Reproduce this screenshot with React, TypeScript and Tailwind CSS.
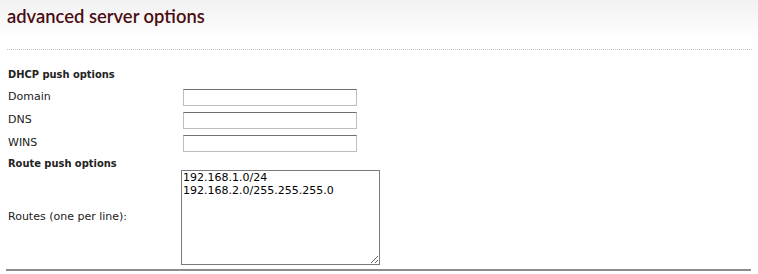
export default function App() {
  const fields = ["Domain", "DNS", "WINS"];
  const boldFont = { fontFamily: '"DejaVu Sans Condensed", "DejaVu Sans", Verdana, sans-serif' };

  return (
    <div className="w-[758px] h-[274px] bg-white overflow-hidden" style={{ fontFamily: '"DejaVu Sans", Verdana, sans-serif' }}>
      {/* header */}
      <div className="h-[40px] bg-gradient-to-b from-[#f1f1f1] to-white pl-[7px] pt-[3px]">
        <h1 className="text-[18.4px] leading-[26px] font-semibold text-[#4b0d12]" style={{ fontFamily: 'Lato, "Open Sans", sans-serif' }}>
          advanced server options
        </h1>
      </div>
      <div className="mx-[7px] mt-[9px] w-[745px] border-t border-dotted border-[#c4c4c4]" />

      <div className="pl-[8px] pt-[14px] text-[11px] text-[#222]">
        <div className="font-bold h-[22px] leading-[22px]" style={boldFont}>DHCP push options</div>
        {fields.map((f) => (
          <div key={f} className="flex items-center h-[23px]">
            <span className="w-[175px]">{f}</span>
            <input
              type="text"
              className="w-[174px] h-[17px] bg-white border border-[#bdbdbd] border-t-[#6f6f6f] outline-none"
            />
          </div>
        ))}
        <div className="font-bold h-[20px] leading-[20px] mt-[-1px]" style={boldFont}>Route push options</div>
        <div className="flex items-center h-[95px] mt-[-4px]">
          <span className="w-[173px]">Routes (one per line):</span>
          <textarea
            readOnly
            defaultValue={"192.168.1.0/24\n192.168.2.0/255.255.255.0"}
            className="w-[199px] h-[95px] border border-[#7a7a7a] px-[1px] py-0 text-[11px] leading-[13px] text-black resize-y outline-none"
            style={{ fontFamily: '"DejaVu Sans", Verdana, sans-serif' }}
          />
        </div>
      </div>
      <div className="ml-[6px] mt-[4px] w-[745px] h-[2px] bg-[#8c8c8c]" />
    </div>
  );
}
